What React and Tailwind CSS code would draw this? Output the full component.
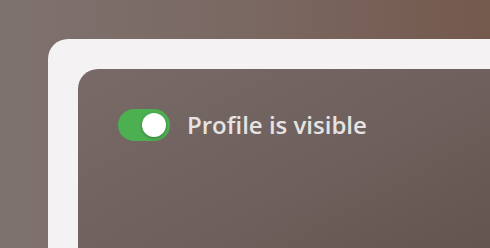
export default function App() {
  return (
    <div className="w-[490px] h-[248px] overflow-hidden bg-gradient-to-r from-[#7e726f] via-[#7a6862] to-[#74594d] pt-[39px] pl-[48px]">
      <div className="w-[480px] h-[260px] rounded-[20px] bg-[#f4f2f2] pt-[30px] pl-[30px]">
        <div className="w-[450px] h-[240px] rounded-[20px] bg-gradient-to-br from-[#776a67] via-[#6d605c] to-[#5d4f48] pt-[40px] pl-[40px]">
          <div className="flex items-center gap-[17px]">
            <button className="w-[52px] h-[32px] rounded-full bg-[#4caf50] flex items-center justify-end p-[4px]">
              <span className="w-[24px] h-[24px] rounded-full bg-white shadow-[0_1px_3px_rgba(0,0,0,0.3)]" />
            </button>
            <span className="font-['Open_Sans',sans-serif] font-semibold text-[24px] leading-none text-[#e6e3e2]">
              Profile is visible
            </span>
          </div>
        </div>
      </div>
    </div>
  );
}
